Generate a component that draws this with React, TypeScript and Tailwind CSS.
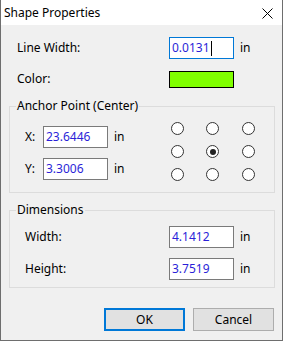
import type { ReactNode } from 'react'

const font = { fontFamily: '"Noto Sans", "Liberation Sans", sans-serif' }

function Field({ value, focused }: { value: string; focused?: boolean }) {
  return (
    <div
      className={
        'flex h-[22px] w-[65px] items-center bg-white pl-[2px] text-[12px] text-[#2b1fd8] border ' +
        (focused ? 'border-[#0078d7]' : 'border-[#7a7a7a]')
      }
    >
      <span>{value}</span>
      {focused && <span className="ml-px inline-block h-[15px] w-px bg-black" />}
    </div>
  )
}

function Radio({ checked }: { checked?: boolean }) {
  return (
    <div className="flex h-[13px] w-[13px] items-center justify-center rounded-full border border-[#333333] bg-white">
      {checked && <div className="h-[6px] w-[6px] rounded-full bg-[#222222]" />}
    </div>
  )
}

function Group({ title, children, className }: { title: string; children: ReactNode; className?: string }) {
  return (
    <fieldset className={'ml-[8px] w-[266px] border border-[#dcdcdc] ' + (className ?? '')}>
      <legend className="ml-[6px] px-px text-[12px] leading-[16px] text-black">{title}</legend>
      {children}
    </fieldset>
  )
}

export default function App() {
  return (
    <div
      className="flex h-[341px] w-[283px] flex-col border-x border-b border-[#6e6e6e] bg-[#f0f0f0] text-[12px] text-black"
      style={font}
    >
      <div className="flex h-[25px] shrink-0 items-center justify-between bg-white pl-[3px] pr-[9px]">
        <span className="leading-none">Shape Properties</span>
        <svg width="11" height="11" viewBox="0 0 11 11" className="mt-px">
          <path d="M0.5 0.5 L10.5 10.5 M10.5 0.5 L0.5 10.5" stroke="#000" strokeWidth="1" />
        </svg>
      </div>

      <div className="flex items-center pt-[12px] pl-[16px]">
        <span className="w-[152px]">Line Width:</span>
        <Field value="0.0131" focused />
        <span className="ml-[6px]">in</span>
      </div>

      <div className="mt-[11px] flex items-center pl-[16px]">
        <span className="w-[152px]">Color:</span>
        <div className="h-[17px] w-[65px] border border-black bg-[#80ff00]" />
      </div>

      <Group title="Anchor Point (Center)" className="mt-[10px] pb-[11px]">
        <div className="flex pt-[8px] pl-[15px]">
          <div className="flex flex-col gap-[10px] pt-[4px]">
            <div className="flex items-center">
              <span className="w-[18px]">X:</span>
              <Field value="23.6446" />
              <span className="ml-[6px]">in</span>
            </div>
            <div className="flex items-center">
              <span className="w-[18px]">Y:</span>
              <Field value="3.3006" />
              <span className="ml-[6px]">in</span>
            </div>
          </div>
          <div className="ml-[46px] grid grid-cols-3 gap-x-[22.5px] gap-y-[10px]">
            <Radio />
            <Radio />
            <Radio />
            <Radio />
            <Radio checked />
            <Radio />
            <Radio />
            <Radio />
            <Radio />
          </div>
        </div>
      </Group>

      <Group title="Dimensions" className="mt-[9px] pb-[7px]">
        <div className="flex flex-col gap-[10px] pt-[8px] pl-[15px]">
          <div className="flex items-center">
            <span className="w-[144px]">Width:</span>
            <Field value="4.1412" />
            <span className="ml-[6px]">in</span>
          </div>
          <div className="flex items-center">
            <span className="w-[144px]">Height:</span>
            <Field value="3.7519" />
            <span className="ml-[6px]">in</span>
          </div>
        </div>
      </Group>

      <div className="mt-[20px] flex justify-end gap-[8px] pr-[8px]">
        <button
          type="button"
          className="h-[23px] w-[81px] border-2 border-[#0078d7] bg-[#e1e1e1] text-[12px]"
        >
          OK
        </button>
        <button
          type="button"
          className="h-[23px] w-[81px] border border-[#adadad] bg-[#e1e1e1] text-[12px]"
        >
          Cancel
        </button>
      </div>
    </div>
  )
}
